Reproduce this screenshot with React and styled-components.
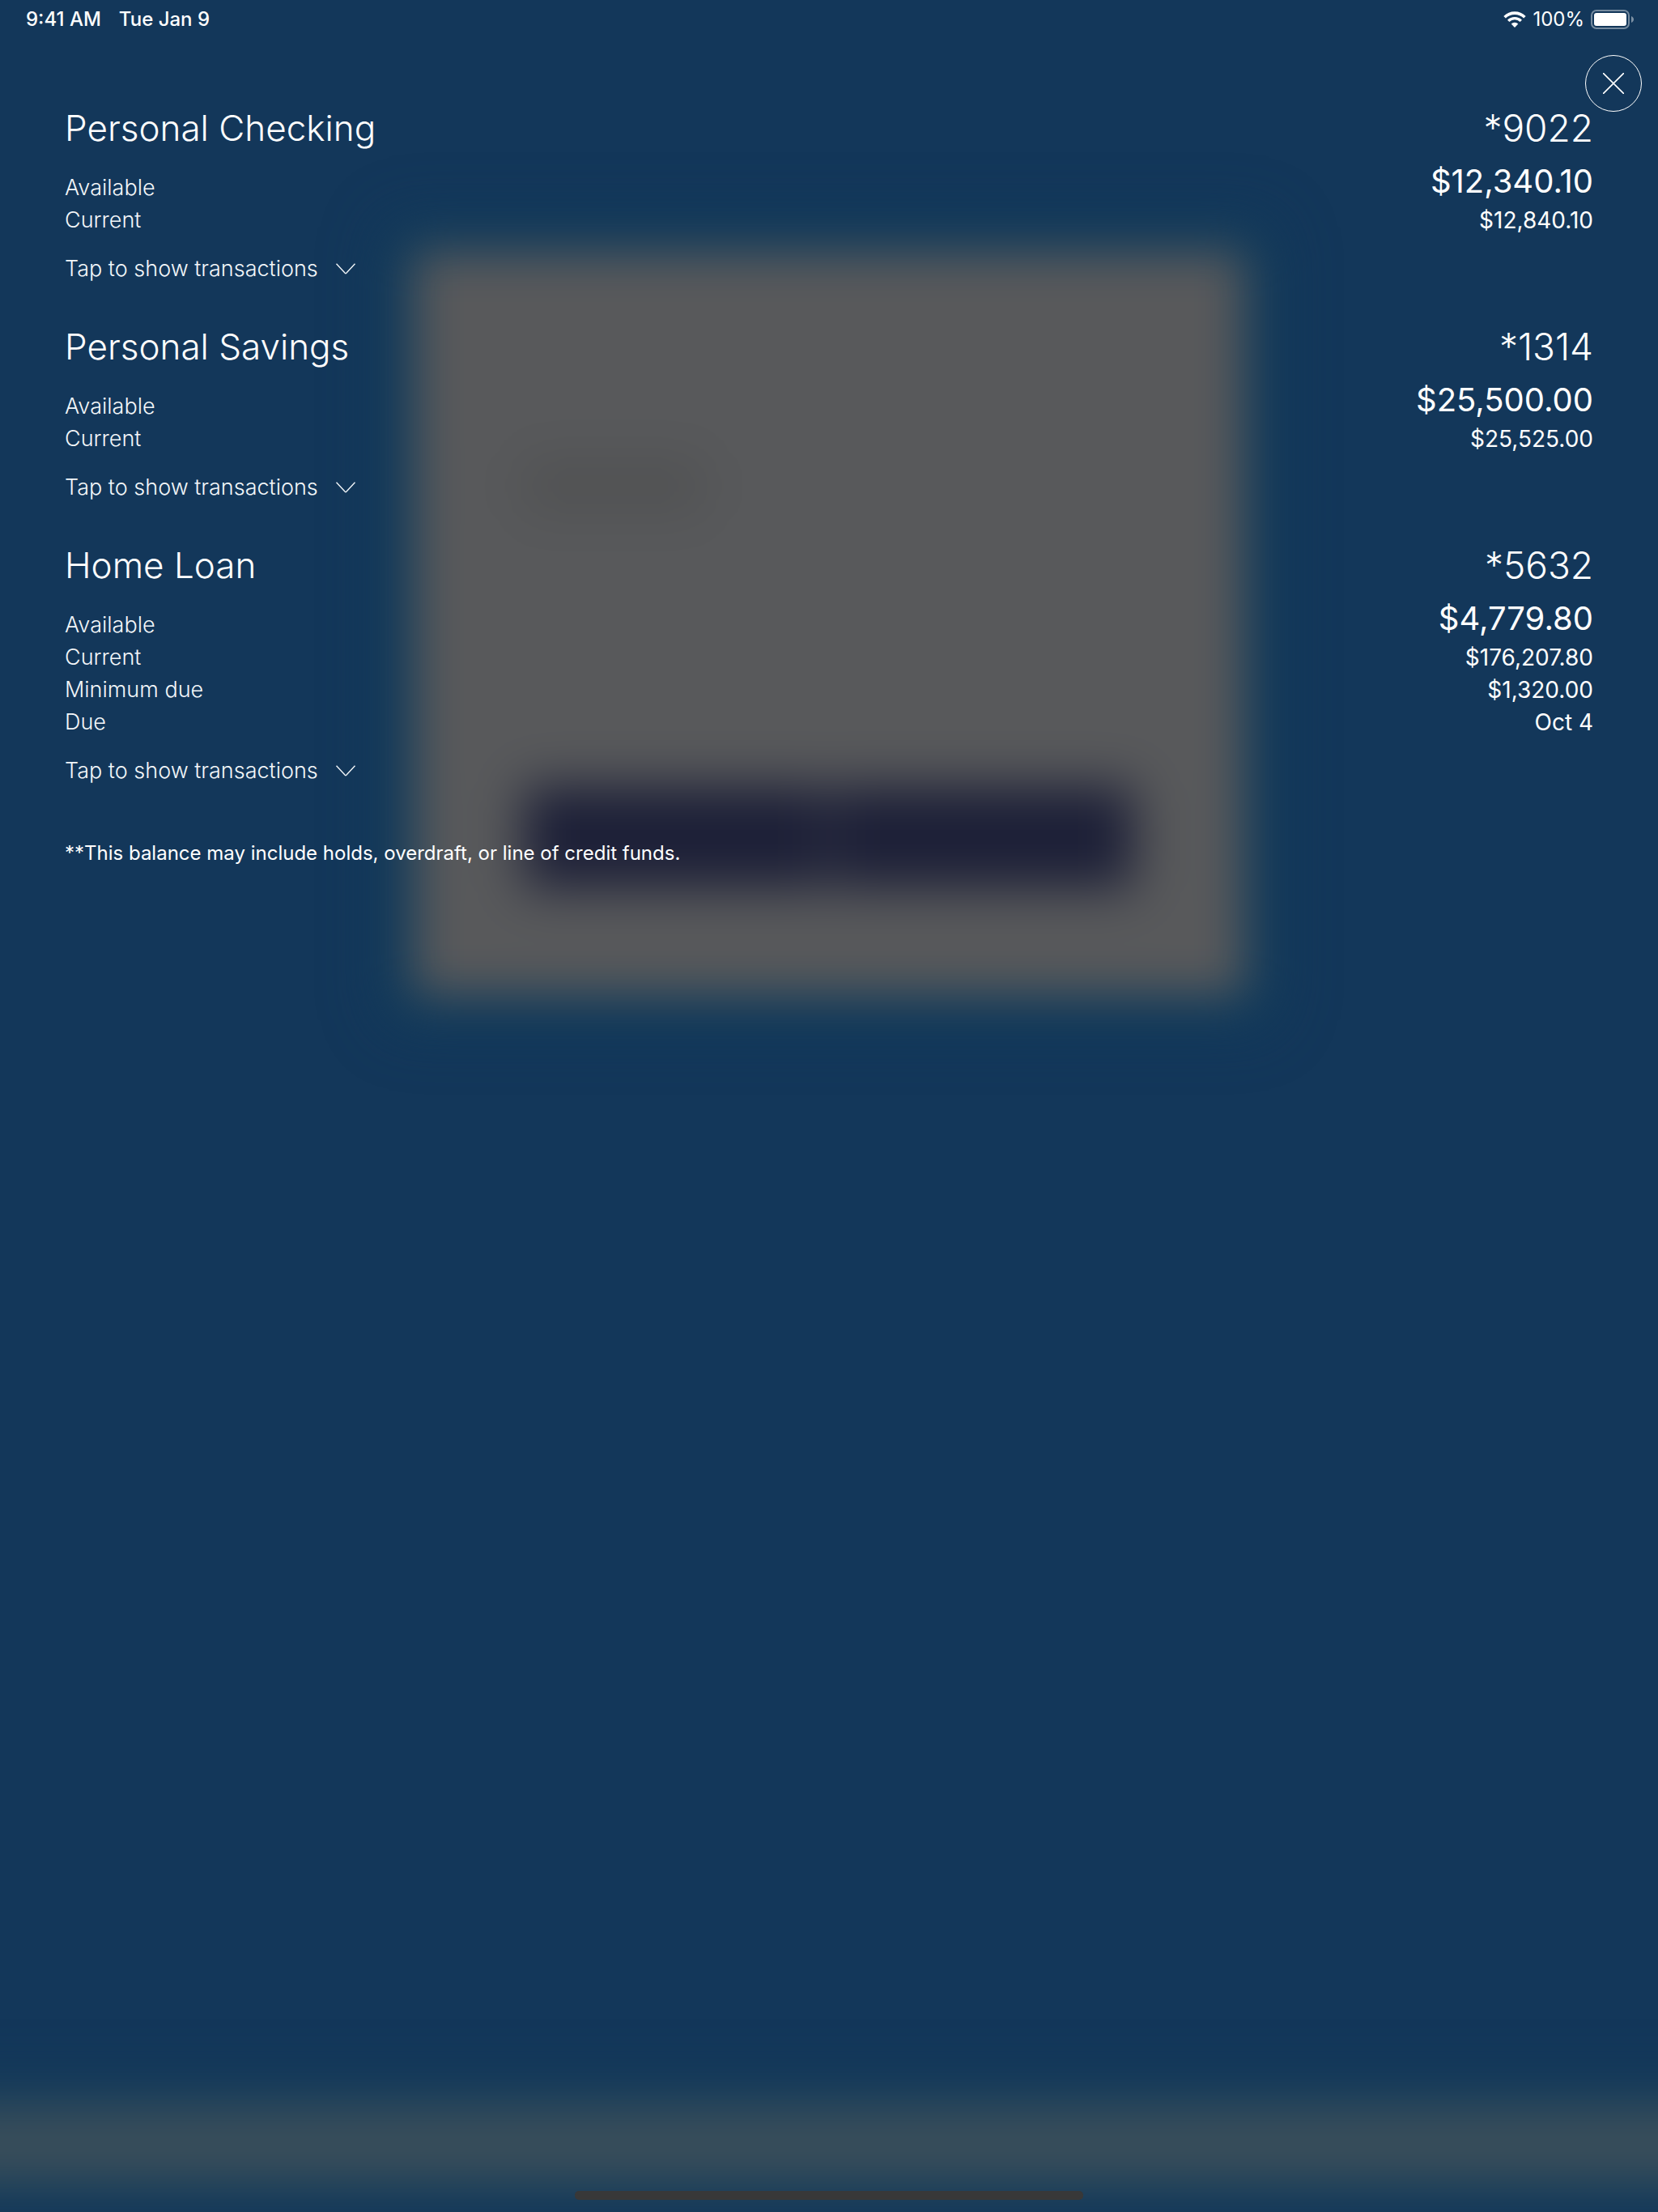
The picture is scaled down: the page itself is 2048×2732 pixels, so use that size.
import React, { useState } from "react";
import styled, { createGlobalStyle } from "styled-components";

const GlobalStyle = createGlobalStyle`
    * {
        box-sizing: border-box;
    }

    body {
        margin: 0;
        background: #13375a;
        color: #ffffff;
        font-family: Inter, "Liberation Sans", sans-serif;
    }
`;

const Screen = styled.div`
    position: relative;
    display: flex;
    flex-direction: column;
    min-height: 100vh;
    overflow: hidden;
    isolation: isolate;
`;

/* the sign-in page, out of focus behind the overlay */
const Backdrop = styled.div`
    position: absolute;
    inset: 0;
    z-index: -1;
    display: flex;
    flex-direction: column;
    align-items: center;
    justify-content: space-between;
    padding-top: 312px;
`;

const BlurredCard = styled.div`
    width: 50%;
    padding: 260px 136px 132px;
    background: #58595b;
    box-shadow: 0 0 40px 32px #133d5a;
    filter: blur(28px);
`;

const BlurredHeading = styled.div`
    width: 220px;
    height: 56px;
    margin-bottom: 344px;
    background: #505152;
    filter: blur(16px);
`;

const BlurredActions = styled.div`
    display: flex;
    gap: 6px;
    filter: blur(14px);
`;

const BlurredAction = styled.div`
    flex: 1;
    height: 124px;
    background: #1c1f37;
`;

const BlurredTabBar = styled.div`
    width: 110%;
    height: 96px;
    margin-bottom: 36px;
    background: #384d5a;
    box-shadow: 0 0 24px 32px #163d5a;
    filter: blur(26px);
`;

const StatusBar = styled.header`
    display: flex;
    justify-content: space-between;
    align-items: center;
    height: 47px;
    padding: 0 30px 0 32px;
    font-size: 24px;
    font-weight: 500;
`;

const StatusGroup = styled.div`
    display: flex;
    align-items: center;
    gap: ${(props) => props.$gap}px;
`;

const BatteryLevel = styled.span`
    font-weight: 400;
`;

const CloseRow = styled.div`
    display: flex;
    justify-content: flex-end;
    padding: 21px 20px 0;
`;

const CloseButton = styled.button`
    display: flex;
    justify-content: center;
    align-items: center;
    width: 70px;
    height: 70px;
    padding: 0;
    border: 1px solid #ffffff;
    border-radius: 50%;
    background: none;
    color: inherit;
    cursor: pointer;
`;

const Accounts = styled.main`
    flex: 1;
    padding: 0 80px;
`;

const Account = styled.section`
    margin-bottom: 56px;
`;

const AccountHeader = styled.div`
    display: flex;
    justify-content: space-between;
    margin-bottom: 22px;
    line-height: 40px;
    font-weight: 300;
`;

const AccountName = styled.h2`
    margin: 0;
    font-size: 44px;
    font-weight: inherit;
`;

const AccountNumber = styled.span`
    font-size: 46px;
`;

const Balances = styled.dl`
    margin: 0 0 20px;
`;

const BalanceRow = styled.div`
    display: flex;
    justify-content: space-between;
    align-items: ${(props) => (props.$main ? "flex-end" : "center")};
    height: ${(props) => (props.$main ? 52 : 40)}px;
    line-height: 40px;
`;

const BalanceLabel = styled.dt`
    color: #f2f6f9;
    font-size: 27px;
    font-weight: 300;
`;

const BalanceValue = styled.dd`
    align-self: flex-start;
    margin: 0;
    font-size: ${(props) => (props.$main ? 40 : 28)}px;
    line-height: ${(props) => (props.$main ? 48 : 40)}px;
`;

const ToggleButton = styled.button`
    display: flex;
    align-items: center;
    gap: 22px;
    padding: 0;
    border: none;
    background: none;
    color: #f2f6f9;
    font-family: inherit;
    font-size: 27px;
    font-weight: 300;
    line-height: 40px;
    cursor: pointer;
`;

const Footnote = styled.p`
    margin: 66px 0 0;
    font-size: 24px;
    line-height: 32px;
`;

const HomeIndicator = styled.div`
    width: 628px;
    height: 11px;
    margin: 0 auto 15px;
    border-radius: 5px;
    background: #383838;
`;

const accounts = [
    {
        name: "Personal Checking",
        number: "*9022",
        balances: [
            ["Available", "$12,340.10"],
            ["Current", "$12,840.10"],
        ],
    },
    {
        name: "Personal Savings",
        number: "*1314",
        balances: [
            ["Available", "$25,500.00"],
            ["Current", "$25,525.00"],
        ],
    },
    {
        name: "Home Loan",
        number: "*5632",
        balances: [
            ["Available", "$4,779.80"],
            ["Current", "$176,207.80"],
            ["Minimum due", "$1,320.00"],
            ["Due", "Oct 4"],
        ],
    },
];

const WifiIcon = () => (
    <svg width="28" height="20" viewBox="0 0 28 20" fill="none" aria-hidden="true">
        <path d="M1.6 7.2a17.6 17.6 0 0 1 24.8 0" stroke="#fff" strokeWidth="3.6" />
        <path d="M6.2 11.9a11 11 0 0 1 15.6 0" stroke="#fff" strokeWidth="3.4" />
        <path d="M14 20l-4.3-4.4a6.2 6.2 0 0 1 8.6 0z" fill="#fff" />
    </svg>
);

const BatteryIcon = () => (
    <svg width="53" height="24" viewBox="0 0 53 24" aria-hidden="true">
        <rect x="1" y="1" width="46" height="22" rx="6" fill="none" stroke="#fff" strokeOpacity="0.42" strokeWidth="2" />
        <rect x="4" y="4" width="40" height="16" rx="3" fill="#fff" />
        <path d="M50 8c2 .8 3 2.3 3 4s-1 3.2-3 4z" fill="#fff" fillOpacity="0.45" />
    </svg>
);

const CloseIcon = () => (
    <svg width="26" height="26" viewBox="0 0 26 26" aria-hidden="true">
        <path d="M0 0l26 26M26 0L0 26" stroke="currentColor" strokeWidth="1.6" />
    </svg>
);

const ChevronIcon = () => (
    <svg width="24" height="14" viewBox="0 0 24 14" fill="none" aria-hidden="true">
        <path d="M.5.8l10.700 11.500q.8.7 1.600 0L23.500.8" stroke="currentColor" strokeWidth="1.4" />
    </svg>
);

const AccountItem = ({ account }) => {
    const [open, setOpen] = useState(false);

    return (
        <Account>
            <AccountHeader>
                <AccountName>{account.name}</AccountName>
                <AccountNumber>{account.number}</AccountNumber>
            </AccountHeader>
            <Balances>
                {account.balances.map(([label, value], index) => (
                    <BalanceRow key={label} $main={index === 0}>
                        <BalanceLabel>{label}</BalanceLabel>
                        <BalanceValue $main={index === 0}>{value}</BalanceValue>
                    </BalanceRow>
                ))}
            </Balances>
            <ToggleButton type="button" aria-expanded={open} onClick={() => setOpen(!open)}>
                Tap to show transactions
                <ChevronIcon />
            </ToggleButton>
        </Account>
    );
};

const App = () => {
    return (
        <Screen>
            <GlobalStyle />
            <Backdrop aria-hidden="true">
                <BlurredCard>
                    <BlurredHeading />
                    <BlurredActions>
                        <BlurredAction />
                        <BlurredAction />
                    </BlurredActions>
                </BlurredCard>
                <BlurredTabBar />
            </Backdrop>
            <StatusBar>
                <StatusGroup $gap={22}>
                    <span>9:41 AM</span>
                    <span>Tue Jan 9</span>
                </StatusGroup>
                <StatusGroup $gap={8}>
                    <WifiIcon />
                    <BatteryLevel>100%</BatteryLevel>
                    <BatteryIcon />
                </StatusGroup>
            </StatusBar>
            <CloseRow>
                <CloseButton type="button" aria-label="Close">
                    <CloseIcon />
                </CloseButton>
            </CloseRow>
            <Accounts>
                {accounts.map((account) => (
                    <AccountItem key={account.name} account={account} />
                ))}
                <Footnote>
                    **This balance may include holds, overdraft, or line of credit funds.
                </Footnote>
            </Accounts>
            <HomeIndicator />
        </Screen>
    );
};

export default App;
